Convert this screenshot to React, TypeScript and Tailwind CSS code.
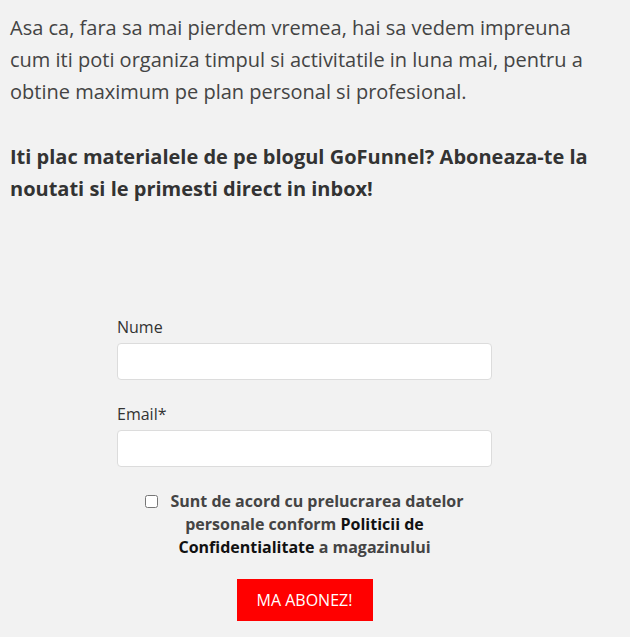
import React from 'react';

export default function App() {
  return (
    <div className="min-h-screen w-full bg-[#f2f2f2] pl-[10px] pr-[30px] pt-[12px] font-['Open_Sans',sans-serif] text-[#444]">
      {/* Intro copy */}
      <p className="text-[20px] leading-[32px]">
        Asa ca, fara sa mai pierdem vremea, hai sa vedem impreuna<br />
        cum iti poti organiza timpul si activitatile in luna mai, pentru a obtine maximum pe plan personal si profesional.
      </p>
      <p className="mt-[33px] text-[20px] leading-[32px] font-bold text-[#333]">
        Iti plac materialele de pe blogul GoFunnel? Aboneaza-te la noutati si le primesti direct in inbox!
      </p>

      {/* Newsletter form */}
      <form className="ml-[107px] mt-[110px] flex w-[375px] flex-col" onSubmit={(e) => e.preventDefault()}>
        <label className="text-[16px] leading-[24px] text-[#333]">Nume</label>
        <input type="text" className="mt-[4px] h-[37px] w-full rounded-[4px] border border-[#dcdcdc] bg-white" />

        <label className="mt-[22px] text-[16px] leading-[24px] text-[#333]">Email*</label>
        <input type="email" className="mt-[4px] h-[37px] w-full rounded-[4px] border border-[#dcdcdc] bg-white" />

        <div className="mt-[23px] flex justify-center">
          <label className="w-[340px] text-center text-[16px] leading-[23px] font-bold text-[#444]">
            <input type="checkbox" className="mr-[12px] inline-block h-[13px] w-[13px] align-[-1px]" />
            Sunt de acord cu prelucrarea datelor personale conform{' '}
            <span className="text-[#111]">Politicii de Confidentialitate</span> a magazinului
          </label>
        </div>

        <div className="mt-[20px] flex justify-center">
          <button type="submit" className="h-[42px] w-[136px] bg-[#ff0000] text-[16px] text-white">
            MA ABONEZ!
          </button>
        </div>
      </form>
    </div>
  );
}
